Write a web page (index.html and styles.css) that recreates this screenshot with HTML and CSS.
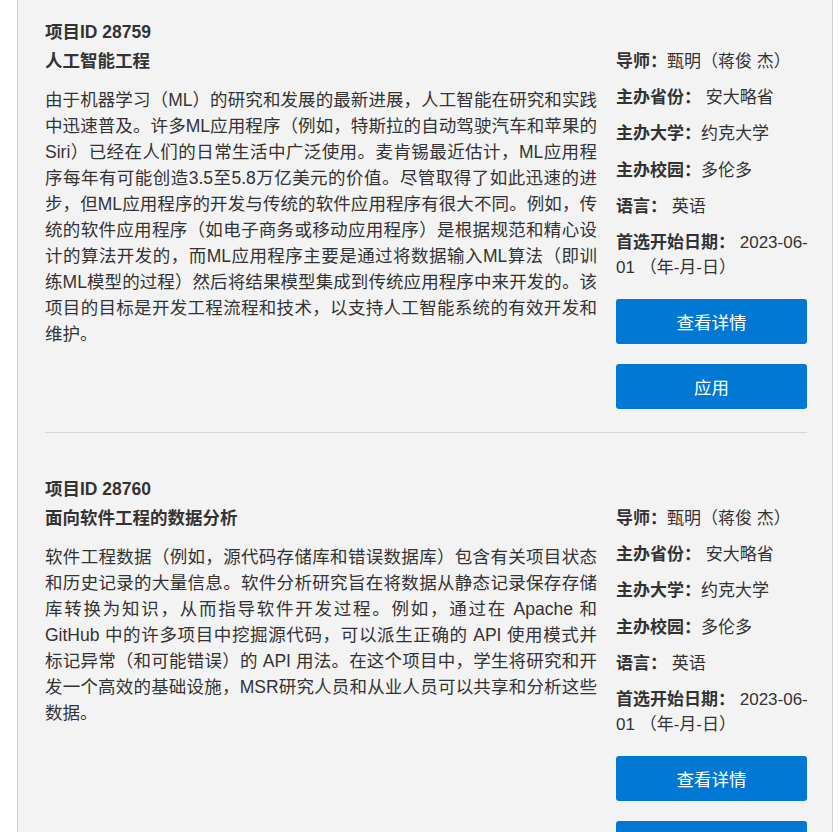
FILE: index.html
```html
<!DOCTYPE html>
<html lang="zh-CN">
<head>
<meta charset="utf-8">
<title>项目列表</title>
<link rel="stylesheet" href="styles.css">
</head>
<body>
<div class="panel">
  <section class="project">
    <h3 class="project-id">项目ID 28759</h3>
    <div class="project-body">
      <div class="project-main">
        <h4 class="project-title">人工智能工程</h4>
        <p class="project-desc">由于机器学习（ML）的研究和发展的最新进展，人工智能在研究和实践中迅速普及。许多ML应用程序（例如，特斯拉的自动驾驶汽车和苹果的Siri）已经在人们的日常生活中广泛使用。麦肯锡最近估计，ML应用程序每年有可能创造3.5至5.8万亿美元的价值。尽管取得了如此迅速的进步，但ML应用程序的开发与传统的软件应用程序有很大不同。例如，传统的软件应用程序（如电子商务或移动应用程序）是根据规范和精心设计的算法开发的，而ML应用程序主要是通过将数据输入ML算法（即训练ML模型的过程）然后将结果模型集成到传统应用程序中来开发的。该项目的目标是开发工程流程和技术，以支持人工智能系统的有效开发和维护。</p>
      </div>
      <aside class="project-side">
        <ul class="meta">
          <li><b>导师：</b>甄明（蒋俊 杰）</li>
          <li><b>主办省份：</b> 安大略省</li>
          <li><b>主办大学：</b>约克大学</li>
          <li><b>主办校园：</b>多伦多</li>
          <li><b>语言：</b> 英语</li>
          <li><b>首选开始日期：</b> 2023-06-01 （年-月-日）</li>
        </ul>
        <button class="btn">查看详情</button>
        <button class="btn">应用</button>
      </aside>
    </div>
  </section>
  <hr class="sep">
  <section class="project">
    <h3 class="project-id">项目ID 28760</h3>
    <div class="project-body">
      <div class="project-main">
        <h4 class="project-title">面向软件工程的数据分析</h4>
        <p class="project-desc">软件工程数据（例如，源代码存储库和错误数据库）包含有关项目状态和历史记录的大量信息。软件分析研究旨在将数据从静态记录保存存储库转换为知识，从而指导软件开发过程。例如，通过在 Apache 和 GitHub 中的许多项目中挖掘源代码，可以派生正确的 API 使用模式并标记异常（和可能错误）的 API 用法。在这个项目中，学生将研究和开发一个高效的基础设施，MSR研究人员和从业人员可以共享和分析这些数据。</p>
      </div>
      <aside class="project-side">
        <ul class="meta">
          <li><b>导师：</b>甄明（蒋俊 杰）</li>
          <li><b>主办省份：</b> 安大略省</li>
          <li><b>主办大学：</b>约克大学</li>
          <li><b>主办校园：</b>多伦多</li>
          <li><b>语言：</b> 英语</li>
          <li><b>首选开始日期：</b> 2023-06-01 （年-月-日）</li>
        </ul>
        <button class="btn">查看详情</button>
        <button class="btn">应用</button>
      </aside>
    </div>
  </section>
  <hr class="sep">
</div>
</body>
</html>
```

FILE: styles.css
```css
html {
  overflow: hidden;
}
body {
  margin: 0;
  background: #ffffff;
  font-family: "Liberation Sans", "Noto Sans CJK SC", sans-serif;
  color: #333333;
  text-autospace: no-autospace;
}
.panel {
  margin-left: 17px;
  width: 816px;
  box-sizing: border-box;
  border-left: 1px solid #cfcfcf;
  border-right: 1px solid #cfcfcf;
  background: #f3f3f3;
  padding: 19px 25px 40px 27px;
  min-height: 1200px;
}
.project-id {
  margin: 0 0 3px;
  font-size: 17.5px;
  line-height: 26px;
  font-weight: bold;
  color: #333;
}
.project-body {
  display: grid;
  grid-template-columns: 552px 191px;
  column-gap: 19px;
}
.project-title {
  margin: 0 0 13px;
  font-size: 17.5px;
  line-height: 26px;
  font-weight: bold;
  color: #333;
}
.project-desc {
  margin: 0;
  font-size: 17.5px;
  line-height: 26px;
  text-align: justify;
  color: #333;
}
.meta {
  list-style: none;
  margin: 0 -6px 0 0;
  padding: 1px 0 0;
  font-size: 17px;
  line-height: 25px;
}
.meta li {
  margin-bottom: 11.2px;
}
.meta li:last-child {
  margin-bottom: 0;
}
.meta b {
  font-weight: bold;
}
.btn {
  display: block;
  width: 191px;
  height: 45px;
  margin-top: 20px;
  border: none;
  border-radius: 3px;
  background: #0078d4;
  color: #ffffff;
  font-family: "Liberation Sans", "Noto Sans CJK SC", sans-serif;
  font-size: 17.5px;
  padding: 0;
}
.meta + .btn {
  margin-top: 19px;
}
.sep {
  margin: 23px 0 43px;
  border: none;
  border-top: 1px solid #d6d6d6;
  height: 0;
}
```
